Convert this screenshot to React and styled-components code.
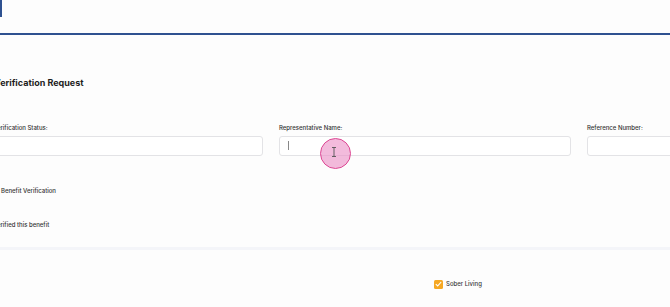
import React from "react";
import styled, { createGlobalStyle } from "styled-components";

const Global = createGlobalStyle`
  html, body { margin: 0; padding: 0; background: #fdfdfd; overflow: hidden; }
  body { font-family: Inter, "Noto Sans", Arial, sans-serif; color: #222; }
  * { box-sizing: border-box; }
`;

const Page = styled.div`
  position: relative;
  width: 670px;
  height: 307px;
  overflow: hidden;
`;

const Header = styled.header`
  height: 35px;
  background: #fdfdfd;
  border-bottom: 2px solid #2e5190;
  display: flex;
  align-items: flex-start;
`;

const HeaderMark = styled.div`
  width: 2px;
  height: 17px;
  background: #2e5190;
`;

const Section = styled.section`
  margin-left: -7px;
  padding-top: 41px;
  display: flex;
  flex-direction: column;
`;

const Title = styled.h2`
  margin: 0 0 0 1px;
  font-size: 9px;
  line-height: 14px;
  font-weight: 700;
  color: #1e1e1e;
`;

const FieldGrid = styled.div`
  margin-top: 33px;
  display: grid;
  grid-template-columns: 270px 292px 292px;
  column-gap: 16px;
`;

const Field = styled.div`
  display: flex;
  flex-direction: column;
  gap: 3px;
`;

const Label = styled.label`
  font-size: 6px;
  line-height: 10px;
  font-weight: 500;
  color: #333;
`;

const InputBox = styled.div`
  position: relative;
  height: 20px;
  border: 1px solid #e3e3e6;
  border-radius: 3px;
  background: #fff;
`;

const Caret = styled.span`
  position: absolute;
  left: 8px;
  top: 4px;
  width: 1px;
  height: 9px;
  background: #888;
`;

const Line = styled.div`
  margin-top: ${(p) => p.$top}px;
  padding-left: ${(p) => p.$indent || 0}px;
  font-size: 6px;
  line-height: 10px;
  font-weight: 500;
  color: #333;
`;

const Separator = styled.hr`
  margin: 17px 0 0 0;
  border: none;
  height: 3px;
  background: #f4f5f9;
  width: 700px;
`;

const CheckRow = styled.div`
  margin-top: 29px;
  margin-left: 441px;
  display: flex;
  align-items: center;
  gap: 3px;
`;

const CheckBox = styled.span`
  width: 9px;
  height: 9px;
  border-radius: 1.5px;
  background: #f6a823;
  display: flex;
  align-items: center;
  justify-content: center;
`;

const CheckLabel = styled.span`
  font-size: 6px;
  line-height: 10px;
  font-weight: 500;
  color: #3a3a3a;
`;

const ClickMarker = styled.div`
  position: absolute;
  left: 320px;
  top: 138px;
  width: 31px;
  height: 31px;
  border-radius: 50%;
  background: rgba(236, 145, 198, 0.62);
  border: 1.5px solid #dd4894;
  display: flex;
  align-items: center;
  justify-content: center;
`;

export default function App() {
  return (
    <Page>
      <Global />
      <Header>
        <HeaderMark />
      </Header>
      <Section>
        <Title>Verification Request</Title>
        <FieldGrid>
          <Field>
            <Label>Verification Status:</Label>
            <InputBox />
          </Field>
          <Field>
            <Label>Representative Name:</Label>
            <InputBox>
              <Caret />
            </InputBox>
          </Field>
          <Field>
            <Label>Reference Number:</Label>
            <InputBox />
          </Field>
        </FieldGrid>
        <Line $top={30} $indent={8}>Benefit Verification</Line>
        <Line $top={24}>Verified this benefit</Line>
        <Separator />
        <CheckRow>
          <CheckBox>
            <svg width="7" height="6" viewBox="0 0 7 6">
              <path d="M0.8 3.1 L2.7 4.9 L6.2 1" fill="none" stroke="#fff" strokeWidth="1.1" />
            </svg>
          </CheckBox>
          <CheckLabel>Sober Living</CheckLabel>
        </CheckRow>
      </Section>
      <ClickMarker>
        <svg width="6" height="10" viewBox="0 0 6 10" style={{ marginLeft: -4, marginTop: -4 }}>
          <path d="M1 0.5 H5 M3 0.5 V9.5 M1 9.5 H5" stroke="#555" strokeWidth="0.9" fill="none" />
        </svg>
      </ClickMarker>
    </Page>
  );
}
